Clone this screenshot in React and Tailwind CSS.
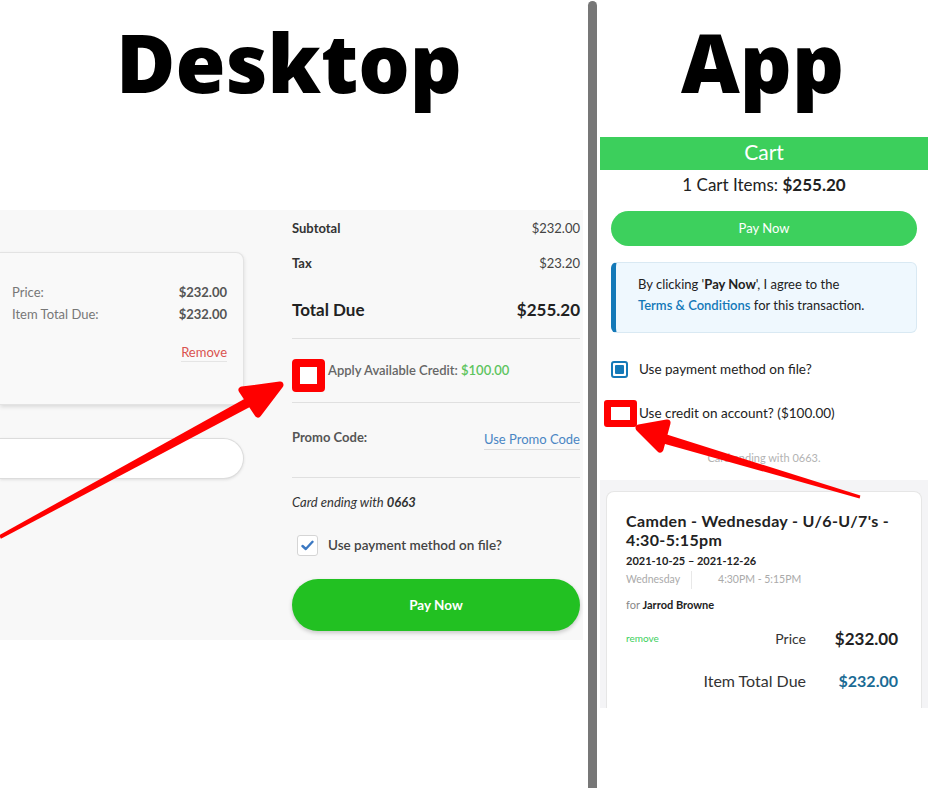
function Arrows() {
    return (
        <svg className="absolute inset-0 pointer-events-none" width="940" height="788" viewBox="0 0 940 788">
            {/* left arrow */}
            <polygon points="0.9,538.8 -0.9,535.2 259.6,390.6 264.4,399.4" fill="#ff0000" />
            <polygon
                points="242,390 280,385 258,414"
                fill="#ff0000"
                stroke="#ff0000"
                strokeWidth="7"
                strokeLinejoin="round"
            />
            {/* right arrow */}
            <polygon points="860.4,495.6 859.6,498.4 653.5,440.8 656.5,431.2" fill="#ff0000" />
            <polygon
                points="667,423 639,428 660,449"
                fill="#ff0000"
                stroke="#ff0000"
                strokeWidth="7"
                strokeLinejoin="round"
            />
        </svg>
    )
}

function DesktopCart() {
    return (
        <div className="w-[583px] h-[430px] bg-[#f8f8f8] flex font-['Lato',sans-serif]">
            {/* item card + promo input, cut off at the left edge */}
            <div className="w-[244px] flex flex-col">
                <div className="mt-[42px] h-[153px] border-y border-r border-[#e3e3e3] rounded-r-lg shadow-[0_2px_4px_rgba(0,0,0,0.12)] bg-[#f9f9f9] text-[13px]">
                    <div className="pt-[30px] pl-[12px] pr-[16px] flex justify-between leading-[18px]">
                        <span className="text-[#777]">Price:</span>
                        <span className="font-bold text-[#555]">$232.00</span>
                    </div>
                    <div className="mt-[4px] pl-[12px] pr-[16px] flex justify-between leading-[18px]">
                        <span className="text-[#777]">Item Total Due:</span>
                        <span className="font-bold text-[#555]">$232.00</span>
                    </div>
                    <div className="mt-[20px] pr-[16px] flex justify-end leading-[18px]">
                        <span className="text-[#d9534f] border-b border-[#e5e5e5]">Remove</span>
                    </div>
                </div>
                <div className="mt-[33px] h-[41px] bg-white border-y border-r border-[#dcdcdc] rounded-r-full shadow-[0_1px_3px_rgba(0,0,0,0.1)]" />
            </div>

            {/* order summary */}
            <div className="ml-[48px] w-[288px] flex flex-col text-[13px]">
                <div className="mt-[9px] flex justify-between leading-[18px]">
                    <span className="font-bold text-[#333]">Subtotal</span>
                    <span className="text-[#444]">$232.00</span>
                </div>
                <div className="mt-[17px] flex justify-between leading-[18px]">
                    <span className="font-bold text-[#333]">Tax</span>
                    <span className="text-[#444]">$23.20</span>
                </div>
                <div className="mt-[26px] flex justify-between leading-[24px] text-[17px] font-bold text-[#222]">
                    <span>Total Due</span>
                    <span>$255.20</span>
                </div>
                <div className="mt-[16px] h-px bg-[#e0e0e0]" />
                <div className="mt-[20px] h-[33px] flex items-start">
                    <div className="w-[33px] h-[33px] border-[8px] border-[#ff0000] rounded-[4px] bg-white" />
                    <span className="ml-[3px] mt-[2px] leading-[18px] font-semibold text-[#666]">
                        Apply Available Credit: <span className="text-[#5ec45e]">$100.00</span>
                    </span>
                </div>
                <div className="mt-[10px] h-px bg-[#e0e0e0]" />
                <div className="mt-[25px] flex justify-between items-start">
                    <span className="font-bold text-[#555] leading-[18px]">Promo Code:</span>
                    <span className="mt-[2px] leading-[18px] pb-[1px] text-[#4a86c4] border-b border-[#dcdcdc]">
                        Use Promo Code
                    </span>
                </div>
                <div className="mt-[27px] h-px bg-[#e0e0e0]" />
                <p className="mt-[15px] leading-[18px] italic text-[#333]">
                    Card ending with <span className="font-bold">0663</span>
                </p>
                <div className="mt-[24px] pl-[5px] h-[21px] flex items-center">
                    <div className="w-[21px] h-[21px] bg-white border border-[#d5d5d5] rounded-[3px] flex items-center justify-center">
                        <svg width="13" height="11" viewBox="0 0 13 11">
                            <path d="M1.5 6 L4.8 9 L11.5 1.8" fill="none" stroke="#3b78c2" strokeWidth="2.4" strokeLinecap="round" strokeLinejoin="round" />
                        </svg>
                    </div>
                    <span className="ml-[10px] text-[13.5px] text-[#444] font-semibold">Use payment method on file?</span>
                </div>
                <button className="mt-[23px] h-[52px] rounded-full bg-[#22c122] text-white font-bold text-[13.5px] shadow-[0_2px_4px_rgba(0,0,0,0.2)]">
                    Pay Now
                </button>
            </div>
        </div>
    )
}

function AppCart() {
    return (
        <div className="ml-[3px] w-[328px] flex flex-col font-['Lato',sans-serif]">
            <div className="h-[33px] pb-[4px] bg-[#3ccf5c] text-white text-[21px] flex items-center justify-center">
                Cart
            </div>
            <p className="mt-[3px] text-[17px] leading-[24px] text-center text-[#222]">
                1 Cart Items: <span className="font-bold">$255.20</span>
            </p>
            <button className="mt-[14px] mx-[11px] h-[35px] rounded-full bg-[#3dd05d] text-white text-[13px]">
                Pay Now
            </button>
            <div className="mt-[16px] mx-[11px] h-[71px] bg-[#eff8fe] border border-[#d9e9f3] border-l-[5px] border-l-[#1479b8] rounded-md pl-[22px] pt-[11px] text-[13px] leading-[21px] text-[#222]">
                <p>
                    By clicking '<span className="font-bold">Pay Now</span>', I agree to the
                </p>
                <p>
                    <span className="text-[#1479b8] font-semibold">Terms &amp; Conditions</span> for this transaction.
                </p>
            </div>
            <div className="mt-[28px] pl-[11px] h-[17px] flex items-center">
                <div className="w-[17px] h-[17px] rounded-[3px] border-2 border-[#1479b8] bg-white p-[2px]">
                    <div className="w-full h-full bg-[#1479b8] rounded-[1px]" />
                </div>
                <span className="ml-[11px] text-[13.5px] text-[#222]">Use payment method on file?</span>
            </div>
            <div className="mt-[22px] pl-[4px] h-[27px] flex items-center">
                <div className="w-[33px] h-[27px] border-[7px] border-[#ff0000] rounded-[3px] bg-white" />
                <span className="ml-[2px] text-[13.5px] text-[#222]">Use credit on account? ($100.00)</span>
            </div>
            <p className="mt-[24px] text-[11px] leading-[14px] text-center text-[#b3b3b3]">Card ending with 0663.</p>

            <div className="mt-[15px] h-[228px] bg-[#f4f4f6] px-[6px] pt-[11px]">
                <div className="h-full bg-white border border-b-0 border-[#e6e6e6] rounded-t-lg pl-[19px] pr-[20px] pt-[19px]">
                    <h2 className="text-[16px] leading-[19px] tracking-[0.35px] font-bold text-[#222]">
                        Camden - Wednesday - U/6-U/7's -<br />4:30-5:15pm
                    </h2>
                    <p className="mt-[5px] text-[11px] leading-[14px] font-bold text-[#222]">2021-10-25 – 2021-12-26</p>
                    <div className="mt-[5px] h-[14px] flex items-center text-[10.5px] text-[#aaa]">
                        <span>Wednesday</span>
                        <div className="ml-[11px] w-px h-[18px] bg-[#e8e8e8]" />
                        <span className="ml-[26px]">4:30PM - 5:15PM</span>
                    </div>
                    <p className="mt-[11px] text-[11px] leading-[14px] text-[#888]">
                        for <span className="font-bold text-[#222]">Jarrod Browne</span>
                    </p>
                    <div className="mt-[14px] h-[22px] pr-[3px] grid grid-cols-[1fr_auto_92px] items-center">
                        <span className="text-[10px] text-[#3ccf5c]">remove</span>
                        <span className="text-[14px] text-[#333] text-right">Price</span>
                        <span className="text-[17px] font-bold text-[#222] text-right">$232.00</span>
                    </div>
                    <div className="mt-[21px] h-[22px] pr-[3px] grid grid-cols-[1fr_auto_92px] items-center">
                        <span />
                        <span className="text-[16px] text-[#333] text-right">Item Total Due</span>
                        <span className="text-[16px] font-bold text-[#1a6b94] text-right">$232.00</span>
                    </div>
                </div>
            </div>
        </div>
    )
}

export default function App() {
    return (
        <div className="relative w-[940px] h-[788px] bg-white overflow-hidden">
            <div className="flex h-full">
                <div className="w-[588px] flex flex-col">
                    <div className="h-[210px] pt-[21px] pr-[10px] text-center">
                        <h1 className="text-[81px] leading-none font-extrabold text-black font-['Open_Sans',sans-serif]">
                            Desktop
                        </h1>
                    </div>
                    <DesktopCart />
                </div>
                <div className="w-[9px] mt-[1px] bg-[#777] rounded-t-full" />
                <div className="flex-1 flex flex-col">
                    <div className="h-[137px] pt-[21px] pr-[12px] text-center">
                        <h1 className="text-[81px] leading-none font-extrabold text-black font-['Open_Sans',sans-serif]">
                            App
                        </h1>
                    </div>
                    <AppCart />
                </div>
            </div>
            <Arrows />
        </div>
    )
}
